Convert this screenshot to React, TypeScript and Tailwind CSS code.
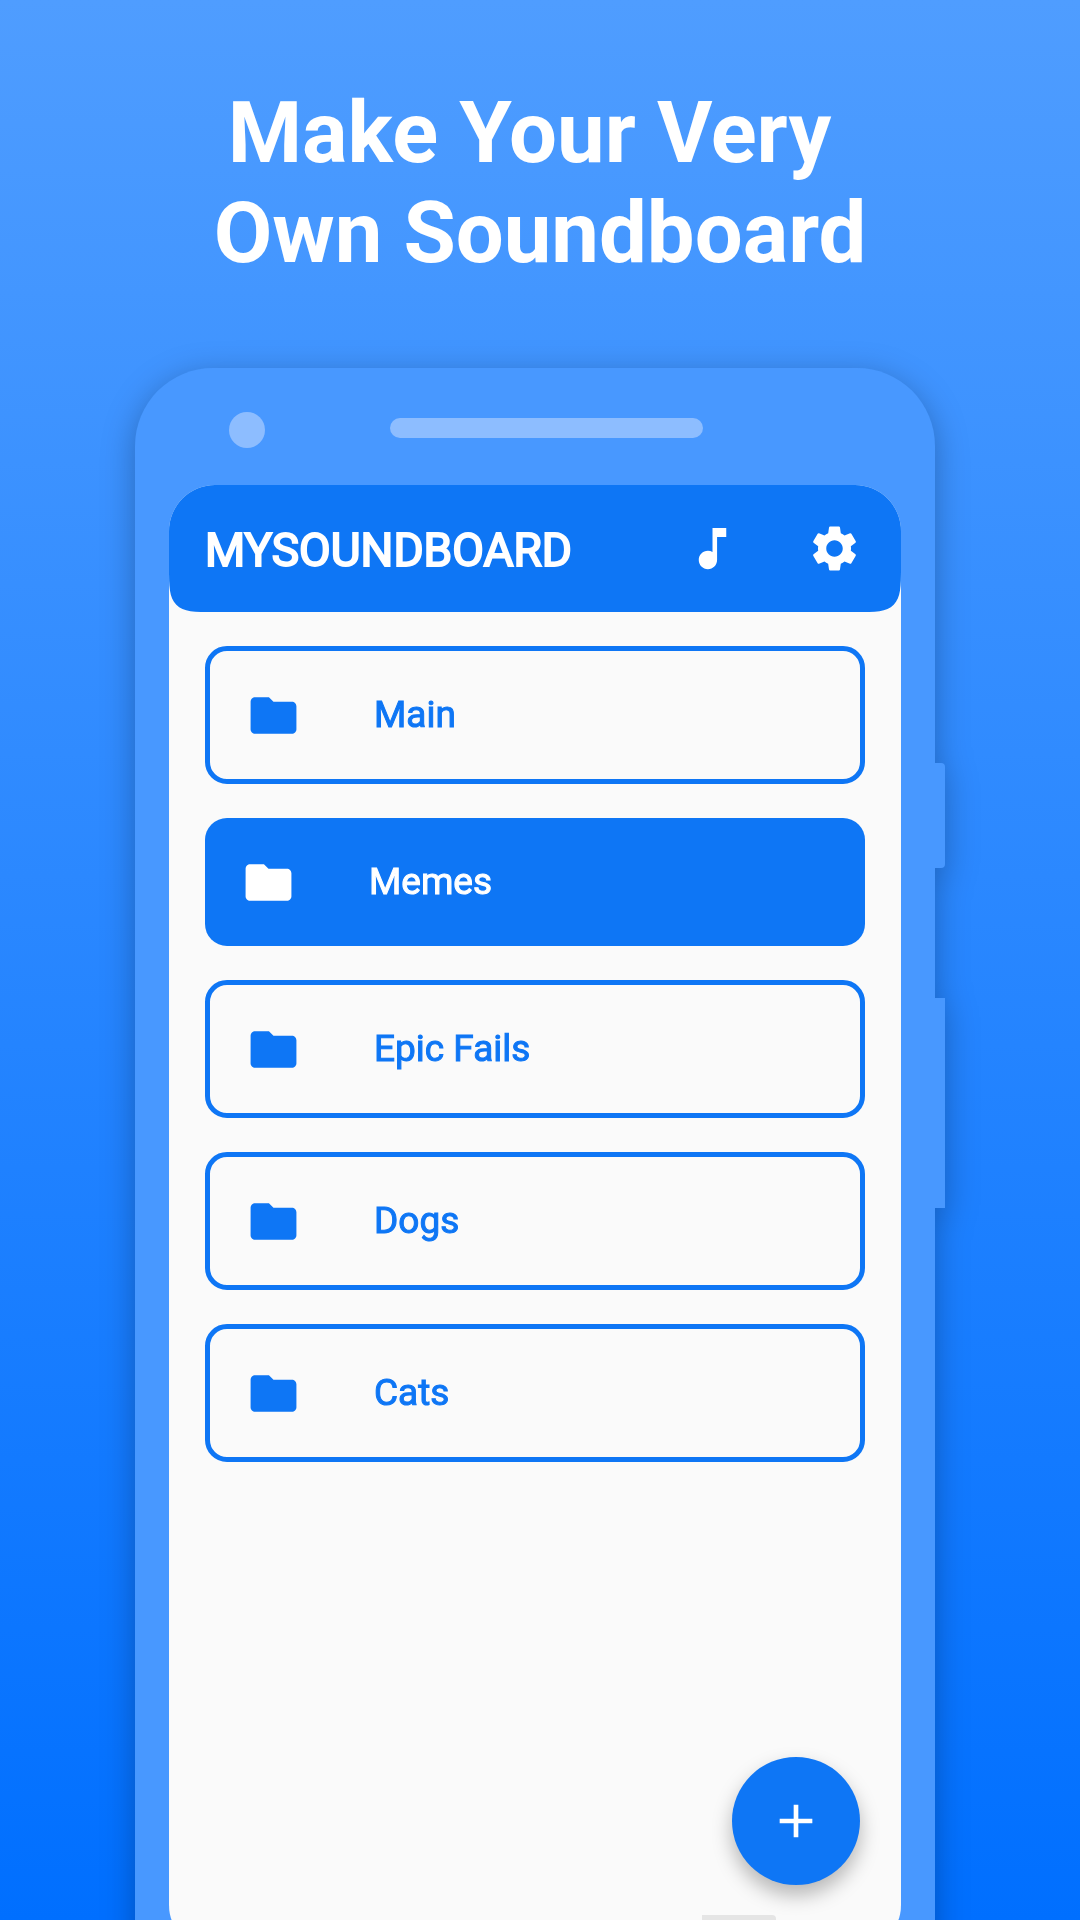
import { MdAdd, MdFolder, MdMusicNote, MdSettings } from "react-icons/md";

type Folder = { name: string; selected?: boolean };

const folders: Folder[] = [
  { name: "Main" },
  { name: "Memes", selected: true },
  { name: "Epic Fails" },
  { name: "Dogs" },
  { name: "Cats" },
];

function FolderRow({ name, selected }: Folder) {
  const tone = selected
    ? "bg-[#0e76f5] text-white"
    : "border-5 border-[#0e76f5] text-[#0e76f5]";
  return (
    <li>
      <button
        type="button"
        className={`flex w-full items-center gap-[73px] rounded-[22px] p-9 text-left ${tone}`}
      >
        <MdFolder className="size-[55px] shrink-0" aria-hidden="true" />
        <span className="text-[37px] leading-[56px] [-webkit-text-stroke:1px]">{name}</span>
      </button>
    </li>
  );
}

function AppBar() {
  return (
    <header className="flex h-[127px] shrink-0 items-center rounded-b-[46px] bg-[#0e76f5] pr-[39px] pl-9 text-white [corner-shape:squircle]">
      <h2 className="flex-1 pt-0.5 text-[46px] leading-[56px] [-webkit-text-stroke:2px]">MYSOUNDBOARD</h2>
      <div className="flex gap-[67px]">
        <button type="button" aria-label="Sounds">
          <MdMusicNote className="size-[55px]" />
        </button>
        <button type="button" aria-label="Settings">
          <MdSettings className="size-[55px]" />
        </button>
      </div>
    </header>
  );
}

export default function App() {
  return (
    <main className="flex h-screen flex-col overflow-hidden bg-linear-to-b/srgb from-[#4f9dff] to-[#006fff] pt-[83px] font-['Roboto',sans-serif]">
      <h1 className="text-center text-[85px] leading-[100px] font-bold whitespace-pre text-white">
        {"Make Your Very "}
        <br />
        Own Soundboard
      </h1>

      <div className="mt-[85px] -mb-20 flex flex-1 px-[12.5%] drop-shadow-[0_8px_16px_rgba(0,0,0,0.28)]">
        <div className="flex min-w-0 flex-1 flex-col rounded-t-[78px] bg-[#4898ff] px-[34px] pb-[49px]">
          <div className="flex h-[117px] shrink-0 pt-11 pl-15">
            <div className="size-9 shrink-0 rounded-full bg-[#8dbdff]" />
            <div className="mt-1.5 ml-[125px] h-5 w-[313px] rounded-full bg-[#8dbdff]" />
          </div>

          <section className="relative flex flex-1 flex-col overflow-hidden rounded-[46px] bg-[#fafafa]">
            <AppBar />
            <ul className="flex flex-col gap-[34px] px-9 pt-[34px]">
              {folders.map((f) => (
                <FolderRow key={f.name} {...f} />
              ))}
            </ul>
            <button
              type="button"
              aria-label="Add folder"
              className="absolute right-[41px] bottom-[66px] flex size-32 items-center justify-center rounded-full bg-[#0e76f5] text-white shadow-[0_10px_20px_rgba(0,0,0,0.28)]"
            >
              <MdAdd className="size-14" />
            </button>
            <div className="absolute right-[125px] bottom-0 h-9 w-[74px] rounded-r-[4px] bg-[#e5e5e5]" />
          </section>
        </div>

        <div className="flex w-[10px] flex-col pt-[395px]">
          <div className="h-[105px] rounded-r-[4px] bg-[#4898ff]" />
          <div className="mt-[130px] h-[210px] bg-[#4898ff]" />
        </div>
      </div>
    </main>
  );
}
